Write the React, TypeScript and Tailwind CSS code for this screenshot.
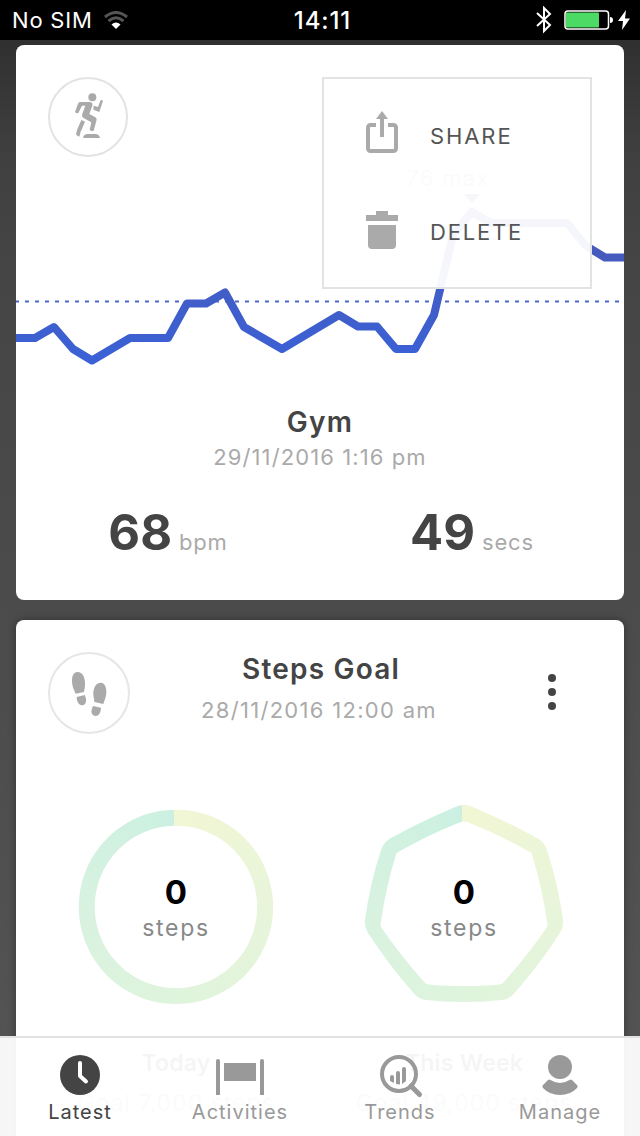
import React from 'react';

interface Goal {
  value: string;
  period: string;
  target: string;
  ring: string;
}

interface Tab {
  label: string;
  active?: boolean;
  icon: React.ReactNode;
}

const linePoints =
  '0,181 19,181 38,170 57,192 76,203.5 114,181 152,181 171,146.5 190,146.5 209,135.5 228,170 266,192 323,158 342,169.5 361,169.5 380,192 399,192 418,158 437,78 456,55 475,66 551,66 570,89 589,100.5 608,100.5';

const goals: Goal[] = [
  {
    value: '0',
    period: 'Today',
    target: 'Goal 7,000 steps',
    ring: "[clip-path:path(evenodd,'M100,5.7a97.2,97.2_0_1_1_-0.1,0Z_M100,21.7a81.2,81.2_0_1_1_-0.1,0Z')]",
  },
  {
    value: '0',
    period: 'This Week',
    target: 'Goal 49,000 steps',
    ring: "[clip-path:path(evenodd,'M100,0.8Q104,1_110,3.5Q144,18_174,34.5Q180,38_182.7,45.3Q194,79_199,116Q200,123_196,129Q176,160_151,188.5Q146,194.5_140,195.7Q120,198_100,198Q80,198_60,195.7Q54,194.5_49,188.5Q24,160_4,129Q0,123_1,116Q6,79_17.3,45.3Q20,38_26,34.5Q56,18_90,3.5Q96,1_100,0.8ZM100,17.5Q103,17.5_107,19.5Q138,32_167.5,49Q178,82_183.7,122Q164,151_138.5,179.5Q135,181.7_100,182Q65,181.7_61.5,179.5Q36,151_16.3,122Q22,82_32.5,49Q62,32_93,19.5Q97,17.5_100,17.5Z')]",
  },
];

const tabs: Tab[] = [
  {
    label: 'Latest',
    active: true,
    icon: (
      <svg className="size-10" viewBox="0 0 40 40" fill="none">
        <circle cx="20" cy="20" r="20" fill="currentColor" />
        <path d="M20 8v13l6 5.500" stroke="#fff" strokeWidth="4" strokeLinecap="round" strokeLinejoin="round" />
      </svg>
    ),
  },
  {
    label: 'Activities',
    icon: (
      <svg className="h-10 w-12" viewBox="0 0 48 40" fill="currentColor">
        <path d="M0 40V6a2 2 0 0 1 4 0v34zM44 40V6a2 2 0 0 1 4 0v34zM8 8h32v18H8z" />
      </svg>
    ),
  },
  {
    label: 'Trends',
    icon: (
      <svg className="size-10 overflow-visible" viewBox="0 0 40 40" fill="none" stroke="currentColor" strokeWidth="4">
        <circle cx="19" cy="19" r="17" />
        <path d="M31 31l8.500 8.500" strokeWidth="5" strokeLinecap="round" />
        <path d="M10 26v-4a2 2 0 0 1 4 0v6zM16 29V18a2 2 0 0 1 4 0v11.500zM22 29V14a2 2 0 0 1 4 0v12z" fill="currentColor" stroke="none" />
      </svg>
    ),
  },
  {
    label: 'Manage',
    icon: (
      <svg className="size-10" viewBox="0 0 40 40" fill="currentColor">
        <circle cx="20" cy="12" r="12" />
        <path d="M8 25q1-1 2.500 0 9.500 6 19 0 1.500-1 2.500 0l5 5q1.500 1.500 0 3-6.500 7-17 7T3 33q-1.500-1.500 0-3z" />
      </svg>
    ),
  },
];

const StatusBar: React.FC = () => (
  <header className="flex h-10 shrink-0 items-center bg-black pr-2.5 pl-3 text-[22px] text-white">
    <div className="flex flex-1 items-center gap-[11px]">
      <span className="pt-px tracking-[0.8px]">No SIM</span>
      <svg className="h-[18px] w-6" viewBox="0 0 24 18" fill="none">
        <path d="M1 6q11-9 22 0" stroke="#555" strokeWidth="3" />
        <path d="M4.500 10q7.500-6.500 15 0" stroke="#555" strokeWidth="3" />
        <path d="M7.500 13.500q4.500-4 9 0L12 18z" fill="#fff" />
      </svg>
    </div>
    <span className="pt-px pl-[3px] text-[24px] font-medium tracking-[0.9px]">14:11</span>
    <div className="flex flex-1 items-center justify-end">
      <svg className="h-7 w-4" viewBox="0 0 16 28" fill="none" stroke="#fff" strokeWidth="2">
        <path d="M1 7l13 12-6 6V2l6 6L1 20" />
      </svg>
      <svg className="ml-3 h-5 w-[50px]" viewBox="0 0 50 20">
        <rect x="1" y="1" width="43.500" height="18" rx="3" fill="none" stroke="#fff" strokeWidth="1.500" />
        <rect x="2" y="2.500" width="33" height="15" rx="1" fill="#4cd964" />
        <path d="M46 7q3 0 3 3t-3 3z" fill="#fff" />
      </svg>
      <svg className="ml-1 h-5 w-3" viewBox="0 0 12 20" fill="#fff">
        <path d="M8 0L0 11h5L4 20l8-11.500H7z" />
      </svg>
    </div>
  </header>
);

const CardMenu: React.FC = () => (
  <div className="absolute top-8 right-8 flex h-[212px] w-[270px] flex-col border-2 border-[#e3e3e3] bg-white/95 pt-[31px] pl-[42px] text-[22px] text-[#555]">
    <button className="flex h-[44px] items-center gap-8">
      <svg className="h-[42px] w-8" viewBox="0 0 32 42" fill="none">
        <path d="M10 14H4.500A2.500 2.500 0 0 0 2 16.500v21A2.500 2.500 0 0 0 4.500 40h23a2.500 2.500 0 0 0 2.500-2.500v-21a2.500 2.500 0 0 0-2.500-2.500H22" stroke="#aaa" strokeWidth="4" />
        <path d="M16 0l6 8h-4v18h-4V8h-4z" fill="#aaa" />
      </svg>
      <span className="pt-2 tracking-[1.9px]">SHARE</span>
    </button>
    <button className="mt-[46px] flex h-[60px] items-center gap-8">
      <svg className="h-[38px] w-8" viewBox="0 0 32 38" fill="#aaa">
        <path d="M0 4h10V0h12v4h10v6H0zM2 14h28v20a4 4 0 0 1-4 4H6a4 4 0 0 1-4-4z" />
      </svg>
      <span className="pt-1 tracking-[1.8px]">DELETE</span>
    </button>
  </div>
);

const HeartRateChart: React.FC = () => (
  <svg className="block h-[220px] w-full" viewBox="0 0 608 220" fill="none">
    <defs>
      <linearGradient id="rate" gradientUnits="userSpaceOnUse" x1="0" y1="50" x2="0" y2="205">
        <stop offset="0" stopColor="#4b58b4" />
        <stop offset="1" stopColor="#3a61d6" />
      </linearGradient>
    </defs>
    <text x="432" y="29" textAnchor="middle" fontSize="22" letterSpacing="1.300" fill="#aaa">76 max</text>
    <path d="M447 37h18l-9 9z" fill="#4b58b4" />
    <path d="M-1 144.500H608" stroke="#4e66c6" strokeWidth="2" strokeDasharray="4 6" />
    <polyline points={linePoints} stroke="url(#rate)" strokeWidth="8" strokeLinejoin="round" />
  </svg>
);

const Metric: React.FC<{ value: string; unit: string }> = ({ value, unit }) => (
  <div className="flex flex-1 items-baseline justify-center gap-[7px]">
    <span className="text-[49px] leading-[60px] font-bold text-[#444]">{value}</span>
    <span className="text-[22px] tracking-[0.8px] text-[#aaa]">{unit}</span>
  </div>
);

const GymCard: React.FC = () => (
  <section className="relative h-[555px] shrink-0 rounded-lg bg-white">
    <div className="px-8 pt-8">
      <div className="size-20 rounded-full border-2 border-[#e3e3e3]">
        <svg className="-m-0.5 size-20" viewBox="144 231 240 240" fill="#aaa">
          <circle cx="277" cy="292" r="12" />
          <path d="M240 306h30q10 2 7 11l-9 25 17 9q7 4 4 12l-8 29q-6 2-12-2l5-23-22-12q-8-5-5-14l9-24h-10l-11 22q-6 2-10-3l9-25q2-5 6-5z" />
          <path d="M281 317l13 4 7-19q4-4 8 0l-11 34-18-7z" />
          <path d="M244 360l11 5-13 30-4 15q-7-2-10-7l4-15z" />
          <path d="M249 414q2-12 14-12h25q10 2 12 12z" />
        </svg>
      </div>
    </div>
    <HeartRateChart />
    <div className="mt-[27px] text-center">
      <h2 className="text-[28px] leading-9 font-semibold tracking-[1.2px] text-[#444]">Gym</h2>
      <p className="text-[22px] leading-[34px] tracking-[1.1px] text-[#aaa]">29/11/2016 1:16 pm</p>
    </div>
    <div className="mt-[29px] flex">
      <Metric value="68" unit="bpm" />
      <Metric value="49" unit="secs" />
    </div>
    <CardMenu />
  </section>
);

const StepsCard: React.FC = () => (
  <section className="flex h-[600px] shrink-0 flex-col rounded-lg bg-white pt-8 shadow-[0_0_8px_rgba(0,0,0,0.35)]">
    <div className="flex h-[82px] items-start px-8">
      <div className="size-[82px] rounded-full border-2 border-[#e6e6e6]">
        <svg className="-m-0.5 size-[82px]" viewBox="12 12 246 246" fill="#aaa">
          <path d="M101 72c15 0 21 16 22 32 1 12-2 20-3 28l-25 5c-5-12-11-22-11-39 0-16 6-26 17-26z" />
          <path d="M98 147l24-6c4 9 6 16 3 23-4 9-14 10-20 4-5-5-7-13-7-21z" />
          <path d="M170 104c12 0 18 14 17 30-1 14-6 24-9 34l-27-6c0-10-4-17-3-29 2-17 9-29 22-29z" />
          <path d="M147 174l24 5c0 8-3 18-9 23-7 5-16 1-19-6-2-7 1-14 4-22z" />
        </svg>
      </div>
      <div className="-mt-0.5 flex-1 text-center">
        <h2 className="text-[28px] leading-[38px] font-semibold tracking-[1.2px] text-[#444]">Steps Goal</h2>
        <p className="pt-1 pr-1 text-[22px] leading-9 tracking-[1.3px] text-[#aaa]">28/11/2016 12:00 am</p>
      </div>
      <button className="flex w-20 flex-col items-center gap-1.5 pt-[22px]" aria-label="More">
        <i className="size-2 rounded-full bg-[#444]" />
        <i className="size-2 rounded-full bg-[#444]" />
        <i className="size-2 rounded-full bg-[#444]" />
      </button>
    </div>
    <div className="mt-[70px] flex px-4">
      {goals.map((goal) => (
        <div key={goal.period} className="flex flex-1 flex-col items-center">
          <div className="grid size-[200px] place-items-center">
            <div className={`col-start-1 row-start-1 size-[200px] bg-[conic-gradient(from_-1.3deg,#f2f6d4,#e8f5da_25%,#dff4dc_50%,#d8f2e0_75%,#cbf0e1)] ${goal.ring}`} />
            <div className="col-start-1 row-start-1 flex flex-col items-center pt-3">
              <span className="text-[33px] leading-9 font-bold text-black">{goal.value}</span>
              <span className="text-[23px] leading-9 tracking-[1.7px] text-[#888]">steps</span>
            </div>
          </div>
          <h3 className="mt-[41px] text-[23px] leading-9 font-semibold tracking-[0.2px] text-[#444]">{goal.period}</h3>
          <p className="pt-0.5 text-[23px] leading-10 tracking-[1px] text-[#aaa]">{goal.target}</p>
        </div>
      ))}
    </div>
  </section>
);

const TabBar: React.FC = () => (
  <nav className="absolute inset-x-0 bottom-0 flex h-[100px] border-t-2 border-[#e2e2e2] bg-white/95">
    {tabs.map((tab) => (
      <button
        key={tab.label}
        className={`flex flex-1 flex-col items-center pt-[17px] ${tab.active ? 'text-[#444]' : 'text-[#999]'}`}
      >
        {tab.icon}
        <span className="mt-0.5 text-[20px] leading-[30px] tracking-[1px]">{tab.label}</span>
      </button>
    ))}
  </nav>
);

const App: React.FC = () => {
  return (
    <div className="relative flex h-[1136px] w-[640px] flex-col overflow-hidden bg-[linear-gradient(#303030_40px,#404040_157px,#464646_300px,#4b4b4b_600px,#535353_1036px)] font-['Inter','Liberation_Sans',sans-serif]">
      <StatusBar />
      <main className="flex min-h-0 flex-1 flex-col gap-5 overflow-hidden px-4 pt-[5px]">
        <GymCard />
        <StepsCard />
      </main>
      <TabBar />
    </div>
  );
};

export default App;
